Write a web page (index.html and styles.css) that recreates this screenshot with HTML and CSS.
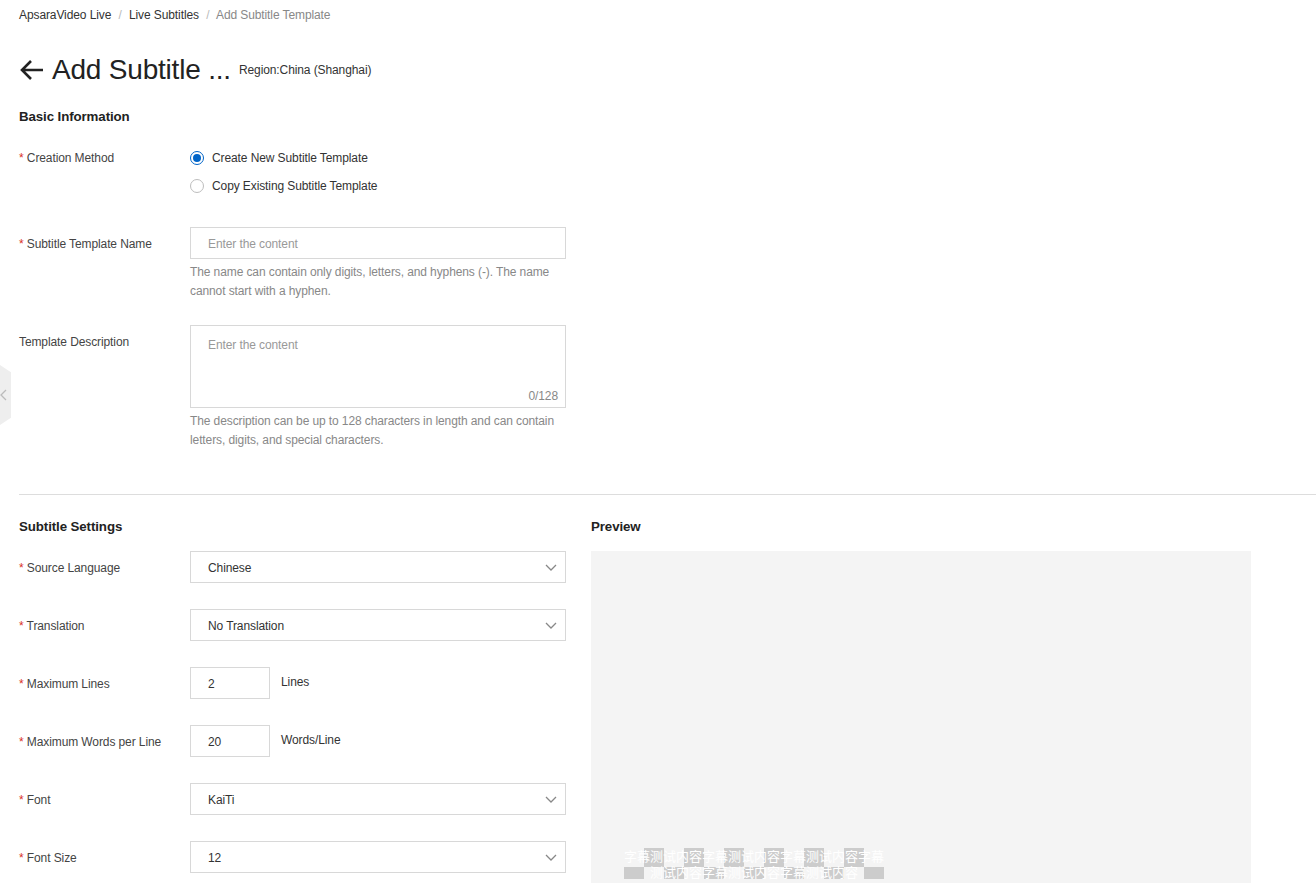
FILE: index.html
```html
<!DOCTYPE html>
<html lang="en">
<head>
    <meta charset="UTF-8">
    <title>Add Subtitle Template</title>
    <link rel="stylesheet" href="styles.css">
</head>
<body>
    <div class="side-tab">
        <svg width="8" height="12" viewBox="0 0 8 12"><path d="M6 1 L1 6 L6 11" fill="none" stroke="#bbb" stroke-width="1.3"/></svg>
    </div>

    <div class="page">
        <div class="breadcrumb">
            <span class="crumb">ApsaraVideo Live</span>
            <span class="sep">/</span>
            <span class="crumb">Live Subtitles</span>
            <span class="sep">/</span>
            <span class="crumb current">Add Subtitle Template</span>
        </div>

        <div class="title-bar">
            <svg class="back" width="26" height="24" viewBox="0 0 26 24">
                <path d="M24 12 H3 M12 3 L3 12 L12 21" fill="none" stroke="#222" stroke-width="2.6"/>
            </svg>
            <h1>Add Subtitle ...</h1>
            <span class="region">Region:China (Shanghai)</span>
        </div>

        <h2 class="section-title">Basic Information</h2>

        <div class="form-row">
            <label class="field-label"><span class="req">*</span> Creation Method</label>
            <div class="field">
                <div class="radio-item"><span class="radio checked"></span>Create New Subtitle Template</div>
                <div class="radio-item"><span class="radio"></span>Copy Existing Subtitle Template</div>
            </div>
        </div>

        <div class="form-row gap-lg">
            <label class="field-label tall"><span class="req">*</span> Subtitle Template Name</label>
            <div class="field">
                <div class="input wide placeholder">Enter the content</div>
                <p class="help">The name can contain only digits, letters, and hyphens (-). The name cannot start with a hyphen.</p>
            </div>
        </div>

        <div class="form-row gap-md">
            <label class="field-label tall">Template Description</label>
            <div class="field">
                <div class="textarea placeholder">
                    Enter the content
                    <span class="counter">0/128</span>
                </div>
                <p class="help">The description can be up to 128 characters in length and can contain letters, digits, and special characters.</p>
            </div>
        </div>

        <hr class="divider">

        <div class="settings">
            <div class="settings-form">
                <h2 class="section-title">Subtitle Settings</h2>

                <div class="form-row sel">
                    <label class="field-label tall"><span class="req">*</span> Source Language</label>
                    <div class="field"><div class="input wide select">Chinese<svg class="caret" width="12" height="7" viewBox="0 0 12 7"><path d="M1 1 L6 6 L11 1" fill="none" stroke="#888" stroke-width="1.3"/></svg></div></div>
                </div>

                <div class="form-row sel">
                    <label class="field-label tall"><span class="req">*</span> Translation</label>
                    <div class="field"><div class="input wide select">No Translation<svg class="caret" width="12" height="7" viewBox="0 0 12 7"><path d="M1 1 L6 6 L11 1" fill="none" stroke="#888" stroke-width="1.3"/></svg></div></div>
                </div>

                <div class="form-row sel">
                    <label class="field-label tall"><span class="req">*</span> Maximum Lines</label>
                    <div class="field inline">
                        <div class="input small">2</div>
                        <span class="unit">Lines</span>
                    </div>
                </div>

                <div class="form-row sel">
                    <label class="field-label tall"><span class="req">*</span> Maximum Words per Line</label>
                    <div class="field inline">
                        <div class="input small">20</div>
                        <span class="unit">Words/Line</span>
                    </div>
                </div>

                <div class="form-row sel">
                    <label class="field-label tall"><span class="req">*</span> Font</label>
                    <div class="field"><div class="input wide select">KaiTi<svg class="caret" width="12" height="7" viewBox="0 0 12 7"><path d="M1 1 L6 6 L11 1" fill="none" stroke="#888" stroke-width="1.3"/></svg></div></div>
                </div>

                <div class="form-row sel">
                    <label class="field-label tall"><span class="req">*</span> Font Size</label>
                    <div class="field"><div class="input wide select">12<svg class="caret" width="12" height="7" viewBox="0 0 12 7"><path d="M1 1 L6 6 L11 1" fill="none" stroke="#888" stroke-width="1.3"/></svg></div></div>
                </div>
            </div>

            <div class="preview">
                <h2 class="section-title">Preview</h2>
                <div class="preview-screen">
                    <div class="subtitle">
                        <div class="sub-line">字幕测试内容字幕测试内容字幕测试内容字幕</div>
                        <div class="sub-line">测试内容字幕测试内容字幕测试内容</div>
                    </div>
                </div>
            </div>
        </div>
    </div>
</body>
</html>
```

FILE: styles.css
```css
body {
    margin: 0;
    font-family: 'Liberation Sans', 'Noto Sans CJK SC', sans-serif;
    font-size: 12px;
    letter-spacing: -0.1px;
    color: #333;
    background-color: #ffffff;
    overflow: hidden;
}
.page {
    padding: 6px 0 0 19px;
}
.side-tab {
    position: absolute;
    left: 0;
    top: 365px;
    width: 11px;
    height: 60px;
    background-color: #eeeeee;
    clip-path: polygon(0 0, 100% 12%, 100% 88%, 0 100%);
    display: flex;
    align-items: center;
}
.breadcrumb {
    line-height: 18px;
}
.crumb {
    color: #333;
}
.crumb.current {
    color: #888;
}
.sep {
    color: #bbb;
    margin: 0 4px;
}
.title-bar {
    display: flex;
    align-items: center;
    height: 40px;
    margin-top: 26px;
}
.back {
    margin-right: 7px;
}
h1 {
    font-size: 28px;
    font-weight: normal;
    color: #222;
    margin: 0 8px 0 0;
    letter-spacing: -0.2px;
}
.region {
    font-size: 12px;
    color: #333;
}
.section-title {
    font-size: 13.3px;
    font-weight: bold;
    color: #222;
    line-height: 20px;
    margin: 17px 0 16px 0;
}
.form-row {
    display: flex;
}
.form-row.gap-lg {
    margin-top: 28px;
}
.form-row.gap-md {
    margin-top: 24px;
}
.field-label {
    width: 171px;
    flex-shrink: 0;
    height: 28px;
    line-height: 30px;
    color: #444;
}
.field-label.tall {
    height: 32px;
    line-height: 34px;
}
.req {
    color: #d93026;
}
.radio-item {
    display: flex;
    align-items: center;
    box-sizing: border-box;
    height: 28px;
    padding-top: 1px;
    color: #333;
}
.radio {
    width: 12px;
    height: 12px;
    border: 1px solid #bdbdbd;
    border-radius: 50%;
    margin-right: 8px;
    box-sizing: content-box;
    position: relative;
}
.radio.checked {
    border-color: #0064c8;
}
.radio.checked::after {
    content: "";
    position: absolute;
    left: 2px;
    top: 2px;
    width: 8px;
    height: 8px;
    border-radius: 50%;
    background-color: #0064c8;
}
.input {
    height: 32px;
    box-sizing: border-box;
    border: 1px solid #d8d8d8;
    padding: 1px 17px 0 17px;
    line-height: 30px;
    color: #333;
    background-color: #fff;
}
.input.wide {
    width: 376px;
}
.input.small {
    width: 80px;
}
.placeholder {
    color: #999;
}
.select {
    display: flex;
    justify-content: space-between;
    align-items: center;
    padding-right: 8px;
}
.help {
    margin: 4px 0 0 0;
    width: 376px;
    line-height: 19px;
    color: #888;
}
.textarea {
    position: relative;
    width: 376px;
    height: 83px;
    box-sizing: border-box;
    border: 1px solid #d8d8d8;
    padding: 10px 17px;
    line-height: 18px;
}
.counter {
    position: absolute;
    right: 7px;
    bottom: 2px;
    color: #888;
}
.divider {
    border: none;
    border-top: 1px solid #dddddd;
    margin: 44px 0 0 0;
}
.settings {
    display: flex;
    gap: 25px;
}
.settings .section-title {
    margin-top: 22px;
    margin-bottom: 14px;
}
.settings-form {
    width: 547px;
}
.form-row.sel {
    margin-bottom: 26px;
}
.field.inline {
    display: flex;
    align-items: flex-start;
}
.unit {
    margin-left: 11px;
    line-height: 30px;
    color: #333;
}
.preview {
    width: 660px;
}
.preview-screen {
    position: relative;
    height: 400px;
    background-color: #f4f4f4;
}
.subtitle {
    position: absolute;
    left: 33px;
    top: 297px;
    width: 260px;
    height: 31px;
    text-align: center;
    font-family: 'Noto Sans CJK SC', sans-serif;
    font-size: 13px;
    letter-spacing: 0;
    color: #fff;
    background-color: #f4f4f4;
    background-image: conic-gradient(#cccccc 0 25%, transparent 0 50%, #cccccc 0 75%, transparent 0);
    background-size: 40px 38px;
}
.sub-line {
    height: 15.5px;
    line-height: 15.5px;
}
```
